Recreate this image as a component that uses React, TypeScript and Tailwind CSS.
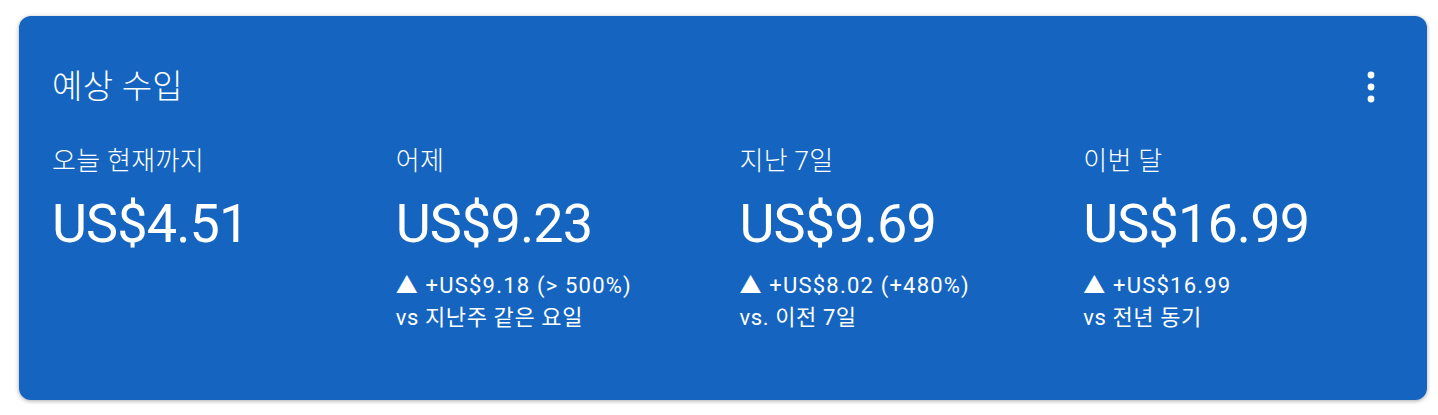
interface Stat {
  label: string
  value: string
  delta?: string
  compare?: string
}

const stats: Stat[] = [
  { label: '오늘 현재까지', value: 'US$4.51' },
  { label: '어제', value: 'US$9.23', delta: '+US$9.18 (> 500%)', compare: 'vs 지난주 같은 요일' },
  { label: '지난 7일', value: 'US$9.69', delta: '+US$8.02 (+480%)', compare: 'vs. 이전 7일' },
  { label: '이번 달', value: 'US$16.99', delta: '+US$16.99', compare: 'vs 전년 동기' },
];

const font = "font-['Roboto','Noto_Sans_CJK_KR',sans-serif]";

const Kebab = () => (
  <svg width="8" height="32" viewBox="0 0 8 32" fill="white">
    <circle cx="4" cy="4" r="3.4" />
    <circle cx="4" cy="16" r="3.4" />
    <circle cx="4" cy="28" r="3.4" />
  </svg>
);

export default function App() {
  return (
    <div className={`w-[1438px] h-[415px] bg-white pt-4 pl-[19px] ${font}`}>
      <div className="w-[1408px] h-[384px] rounded-xl bg-[#1565c0] text-white shadow-[0_1px_4px_rgba(0,0,0,0.35)]">
        {/* header */}
        <div className="flex items-center justify-between pl-[33px] pr-[52px] pt-[51px]">
          <h2 className="text-[33px] leading-[40px] font-light tracking-[0.3px]">예상 수입</h2>
          <Kebab />
        </div>

        {/* stats */}
        <div className="grid grid-cols-4 pl-[33px] pt-[38px]">
          {stats.map((s) => (
            <div key={s.label} className="flex flex-col">
              <span className="text-[26px] leading-[32px] font-light tracking-[0.3px]">{s.label}</span>
              <span className="text-[54px] leading-[62px] mt-[16px] tracking-[-0.9px]">{s.value}</span>
              {s.delta && (
                <div className="mt-[15px] text-[22px] leading-[32px] tracking-[1.2px]">
                  <div>▲ {s.delta}</div>
                  <div className="tracking-[0.6px]">{s.compare}</div>
                </div>
              )}
            </div>
          ))}
        </div>
      </div>
    </div>
  );
}
